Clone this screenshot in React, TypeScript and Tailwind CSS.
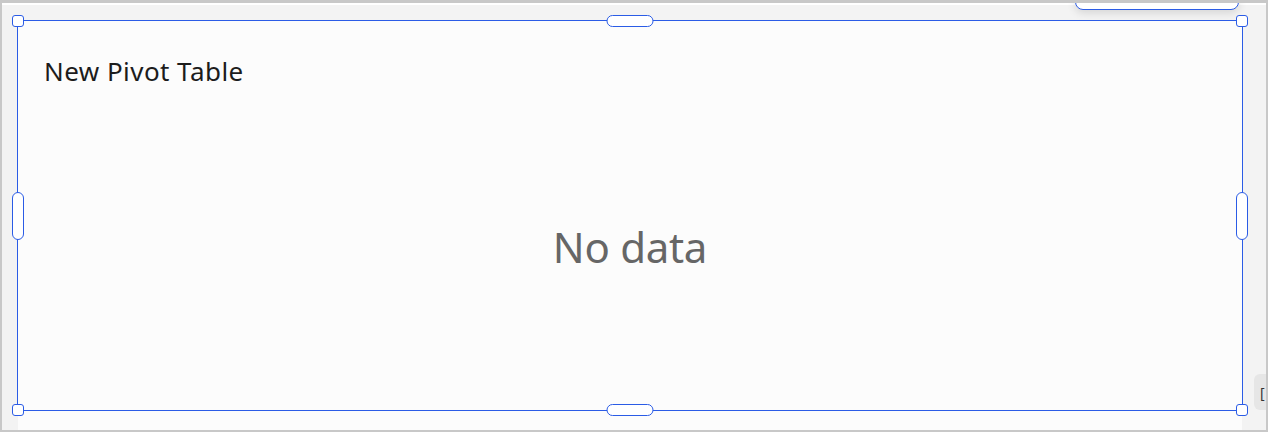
function Handle({ className }: { className: string }) {
  return <div className={`absolute bg-white border border-[#2b5ce6] ${className}`} />;
}

export default function App() {
  return (
    <div className="w-[1268px] h-[432px] overflow-hidden bg-[#f3f3f3] border-x-2 border-t-[3px] border-b-2 border-[#c8c8c8] flex flex-col font-['Noto_Sans',sans-serif]">
      <div className="h-[2px] bg-white" />
      <div className="relative flex-1 flex pl-[16px] pr-[24px] pt-[15px]">
        {/* top-right tab peeking from above */}
        <div className="absolute right-[27px] top-[-9px] w-[164px] h-[14px] bg-white border border-[#2b5ce6] rounded-b-[8px] shadow-[0_3px_8px_rgba(0,0,0,0.12)]" />

        {/* right edge cut-off control */}
        <div className="absolute right-[-8px] bottom-[20px] w-[20px] h-[36px] bg-[#e6e6e6] rounded-[6px] flex items-center pl-[6px] text-[14px] text-[#333]">
          [
        </div>

        <div className="relative flex-1 bg-[#fcfcfc] flex flex-col">
          <div className="pl-[26px] pt-[34px] text-[26px] leading-[34px] text-[#1c1c1c] tracking-[0.45px]">
            New Pivot Table
          </div>
          <div className="flex-1 flex items-center justify-center pb-[26px]">
            <span className="text-[42px] text-[#666666] tracking-[-0.3px]">No data</span>
          </div>

          {/* selection frame with handles */}
          <div className="absolute left-[-1px] right-[-1px] top-0 h-[391px] border border-[#2b5ce6]">
            <Handle className="left-[-6px] top-[-6px] w-[12px] h-[12px] rounded-[3px]" />
            <Handle className="right-[-6px] top-[-6px] w-[12px] h-[12px] rounded-[3px]" />
            <Handle className="left-[-6px] bottom-[-6px] w-[12px] h-[12px] rounded-[3px]" />
            <Handle className="right-[-6px] bottom-[-6px] w-[12px] h-[12px] rounded-[3px]" />
            <Handle className="left-1/2 -translate-x-1/2 top-[-6px] w-[47px] h-[12px] rounded-full" />
            <Handle className="left-1/2 -translate-x-1/2 bottom-[-6px] w-[47px] h-[12px] rounded-full" />
            <Handle className="top-1/2 -translate-y-1/2 left-[-6px] w-[12px] h-[48px] rounded-full" />
            <Handle className="top-1/2 -translate-y-1/2 right-[-6px] w-[12px] h-[48px] rounded-full" />
          </div>
        </div>
      </div>
    </div>
  );
}
